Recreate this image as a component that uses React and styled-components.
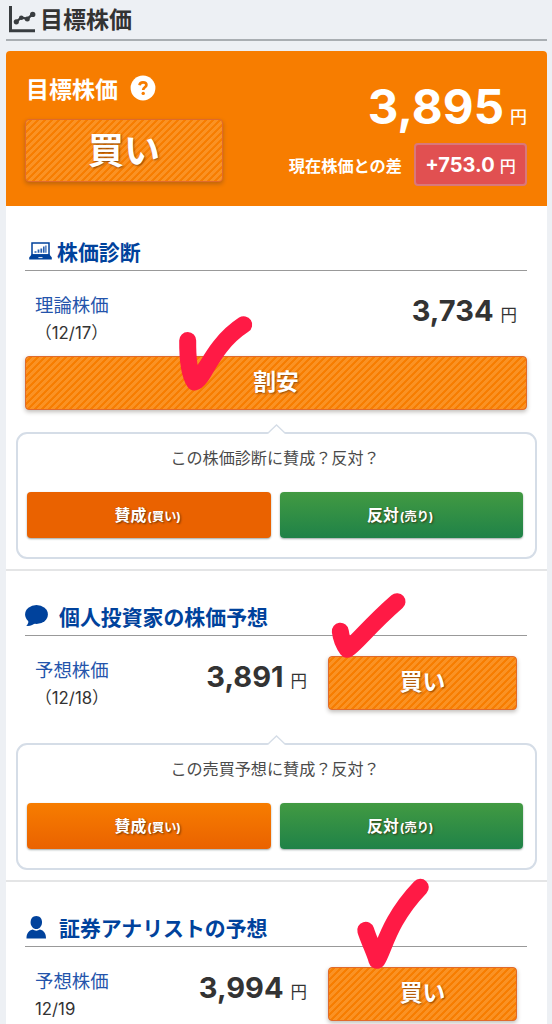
// Target price page for a stock: summary box on top, then one panel per kind of forecast
// Hand drawn check marks are laid over the page in a single svg

import React from 'react';
import styled, {createGlobalStyle, css} from 'styled-components';

const GlobalStyle = createGlobalStyle`
  * {
    box-sizing: border-box;
  }
  body {
    margin: 0;
    background-color: #edf0f4;
    color: #333;
    font-family: Inter, "Noto Sans CJK JP", sans-serif;
    overflow: hidden;
  }
`;

const Page = styled.div`
  position: relative;
  width: 552px;
  height: 1024px;
  overflow: hidden;
`;

const PageHeader = styled.h1`
  display: flex;
  align-items: center;
  gap: 4px;
  height: 41px;
  margin: 0 5px 0 6px;
  padding: 0 0 0 3px;
  border-bottom: 2px solid #a9aeb2;
  font-size: 23px;
  font-weight: 700;
  line-height: 38px;
  white-space: nowrap;
`;

const Card = styled.main`
  margin: 10px 5px 0 6px;
  background-color: #fff;
  border-radius: 4px 4px 0 0;
`;

const Summary = styled.section`
  display: flex;
  justify-content: space-between;
  height: 155px;
  padding: 0 20px 0 19px;
  border-radius: 4px 4px 0 0;
  background-color: #f77d00;
  color: #fff;
`;

const SummaryLeft = styled.div`
  padding-top: 22px;
`;

const SummaryTitle = styled.h2`
  display: flex;
  align-items: center;
  gap: 12px;
  height: 30px;
  margin: 0 0 16px;
  padding-left: 1px;
  font-size: 23px;
  font-weight: 700;
`;

const SummaryRight = styled.div`
  display: flex;
  flex-direction: column;
  align-items: flex-end;
  padding-top: 31px;
`;

const TargetPrice = styled.div`
  display: flex;
  align-items: baseline;
  gap: 6px;
  height: 61px;
  font-size: 47.5px;
  font-weight: 700;
  line-height: 50px;
`;

const TargetYen = styled.span`
  position: relative;
  top: -1px;
  font-size: 17px;
  font-weight: 500;
`;

const Difference = styled.div`
  display: flex;
  align-items: center;
  gap: 12px;
  font-size: 16.2px;
  font-weight: 700;
`;

const DifferenceBadge = styled.span`
  display: flex;
  align-items: center;
  justify-content: center;
  gap: 5px;
  width: 113px;
  height: 43px;
  border: 2px solid #d9787b;
  border-radius: 4px;
  background-color: #e15051;
  font-size: 20px;
  font-weight: 700;
`;

const SmallYen = styled.span`
  font-size: 16px;
  font-weight: 500;
`;

const Verdict = styled.div`
  display: flex;
  align-items: center;
  justify-content: center;
  flex: none;
  width: ${props => props.$width || '100%'};
  height: ${props => props.$height || 54}px;
  padding-bottom: 5px;
  border: 1px solid #e06a2c;
  border-radius: 4px;
  background-color: #f77d00;
  background-image: repeating-linear-gradient(
    135deg,
    #fa9224 0,
    #fa9224 2.2px,
    #f77d00 2.9px,
    #f77d00 4.3px,
    #fa9224 4.95px
  );
  box-shadow: 0 2px 4px rgba(60, 50, 40, 0.32);
  color: #fff;
  font-size: ${props => props.$size || 22.8}px;
  font-weight: 700;
  text-shadow: 1px 1px 2px rgba(90, 40, 0, 0.65);
`;

const Panel = styled.section`
  height: ${props => props.$height}px;
  padding: 28px 10px 0;
  border-bottom: 2px solid #e4e5e6;
`;

const PanelTitle = styled.h2`
  display: flex;
  align-items: center;
  gap: ${props => props.$gap}px;
  height: 37px;
  margin: 0 10px 0 9px;
  padding-bottom: 3px;
  border-bottom: 1.5px solid #999;
  color: #00429c;
  font-size: 20.9px;
  font-weight: 700;
`;

const PanelIcon = styled.span`
  display: flex;
  margin-left: ${props => props.$left || 0}px;
  padding-top: ${props => props.$top || 0}px;
`;

const ForecastRow = styled.div`
  display: flex;
  align-items: flex-start;
  height: ${props => props.$height}px;
  padding: 20px 20px 0 19px;
`;

const ForecastLabel = styled.div`
  width: 120px;
`;

const ForecastName = styled.a`
  display: block;
  color: #2454ab;
  font-size: 18.4px;
  line-height: 28px;
`;

const ForecastDate = styled.div`
  font-size: 16.8px;
  line-height: 28px;
`;

const Price = styled.div`
  display: flex;
  align-items: baseline;
  justify-content: flex-end;
  gap: 7px;
  flex: 1;
  padding-top: ${props => props.$top}px;
  font-size: 29px;
  font-weight: 700;
  line-height: 40px;
`;

const Yen = styled.span`
  font-size: 16.5px;
  font-weight: 400;
`;

const VerdictSlot = styled.div`
  margin-left: 21px;
`;

const WideVerdict = styled.div`
  margin: 0 10px 22px 9px;
`;

const Balloon = styled.div`
  position: relative;
  height: 127px;
  padding: 11px 12px 0 9px;
  border: 2px solid #d5dde7;
  border-radius: 11px;
`;

const BalloonTip = styled.svg`
  position: absolute;
  top: -10px;
  left: 248px;
`;

const Question = styled.p`
  height: 47px;
  margin: 0;
  color: #4a4a4a;
  font-size: 16.1px;
  line-height: 26px;
  text-align: center;
`;

const VoteButtons = styled.div`
  display: grid;
  grid-template-columns: 1fr 1fr;
  gap: 9px;
`;

const voteColors = {
  pressed: css`background: #ea6200;`,
  agree: css`background: linear-gradient(#f77d00, #ea6200);`,
  disagree: css`background: linear-gradient(#429a42, #1f8248);`,
};

const VoteButton = styled.button`
  display: flex;
  align-items: center;
  justify-content: center;
  height: 46px;
  padding: 0 2px 2px 0;
  border: 0;
  border-radius: 4px;
  ${props => voteColors[props.$kind]}
  box-shadow: 0 1px 2px rgba(40, 60, 60, 0.45);
  color: #fff;
  font-family: inherit;
  font-size: 15.9px;
  font-weight: 700;
  text-shadow: 1px 1px 2px rgba(60, 30, 0, 0.7);
`;

const VoteNote = styled.span`
  padding-top: 3px;
  margin-left: 1px;
  font-size: 12.2px;
`;

const Marks = styled.svg`
  position: absolute;
  top: 0;
  left: 0;
  pointer-events: none;
`;

const ChartIcon = () => (
  <svg width="27" height="27" viewBox="0 0 27 27" fill="none" stroke="#393d40">
    <path d="M1.5 0V24.8H26" strokeWidth="3" />
    <path d="M7.3 15.8L12.3 11.5L18.3 12.9L23.7 8.2" strokeWidth="2.3" />
    <g fill="#393d40" stroke="none">
      <circle cx="7.3" cy="15.8" r="2.6" />
      <circle cx="12.3" cy="11.7" r="2.3" />
      <circle cx="18.3" cy="12.9" r="2.5" />
      <circle cx="23.7" cy="8.4" r="2.7" />
    </g>
  </svg>
);

const HelpIcon = () => (
  <svg width="26" height="26" viewBox="0 0 26 26">
    <circle cx="13" cy="13" r="12.4" fill="#fff" />
    <path d="M9.5 10.3C9.8 8.2 11.2 7.3 13 7.3C15 7.3 16.4 8.4 16.4 10C16.4 12.2 13.2 12.3 13.2 14.9" fill="none" stroke="#f77d00" strokeWidth="2.7" />
    <circle cx="13.2" cy="18.4" r="1.7" fill="#f77d00" />
  </svg>
);

const LaptopIcon = () => (
  <svg width="23" height="18" viewBox="0 0 23 18">
    <path d="M3 1H20V13H3Z" fill="#fff" stroke="#00429c" strokeWidth="1.5" />
    <path d="M5.5 10.7V9.3H7.5V10.7ZM8.6 10.7V7.5H10.4V10.7ZM11.4 10.7V6.6H13.2V10.7ZM14 10.7V4.6H15.6V10.7ZM16.3 10.7V3.6H17.5V10.7Z" fill="#2860b0" />
    <path d="M2.7 12.2H20.3L22.8 15.5V17.5H0.2V15.5Z" fill="#00429c" />
    <path d="M9.4 15.6H13.5" stroke="#fff" strokeWidth="0.9" />
  </svg>
);

const BubbleIcon = () => (
  <svg width="24" height="22" viewBox="0 0 24 22" fill="#00429c">
    <ellipse cx="11.5" cy="9.5" rx="11.4" ry="9.4" />
    <path d="M3 14C4 17 3.3 19 1.2 20.8C5 21.3 8.5 19.8 10.5 18Z" />
  </svg>
);

const PersonIcon = () => (
  <svg width="22" height="23" viewBox="0 0 22 23" fill="#00429c">
    <path d="M10.3 0C14 0 16 2.8 16 6.2C16 10 13.5 13 10.3 13C7.1 13 4.6 10 4.6 6.2C4.6 2.8 6.6 0 10.3 0Z" />
    <path d="M0.5 22.5C0.5 17.5 2.7 14.6 6.7 13.6C8.8 15 11.8 15 13.9 13.6C17.9 14.6 20 17.5 20 22.5Z" />
  </svg>
);

const Forecast = ({name, date, price, top, height, verdict}) => (
  <ForecastRow $height={height}>
    <ForecastLabel>
      <ForecastName>{name}</ForecastName>
      <ForecastDate>{date}</ForecastDate>
    </ForecastLabel>
    <Price $top={top}>{price}<Yen>円</Yen></Price>
    {verdict && (
      <VerdictSlot>
        <Verdict $width="189px">{verdict}</Verdict>
      </VerdictSlot>
    )}
  </ForecastRow>
);

const Vote = ({question, agree}) => (
  <Balloon>
    <BalloonTip width="22" height="11" viewBox="0 0 22 11">
      <path d="M0 11L2 9.5L10.5 1L19 9.5L21 11Z" fill="#fff" />
      <path d="M1.5 9.5L10.5 1L19.5 9.5" fill="none" stroke="#d5dde7" strokeWidth="1.3" />
    </BalloonTip>
    <Question>{question}</Question>
    <VoteButtons>
      <VoteButton $kind={agree}>賛成<VoteNote>(買い)</VoteNote></VoteButton>
      <VoteButton $kind="disagree">反対<VoteNote>(売り)</VoteNote></VoteButton>
    </VoteButtons>
  </Balloon>
);

const App = () => (
  <Page>
    <GlobalStyle />
    <PageHeader><ChartIcon />目標株価</PageHeader>
    <Card>
      <Summary>
        <SummaryLeft>
          <SummaryTitle>目標株価<HelpIcon /></SummaryTitle>
          <Verdict $width="198px" $height={63} $size={36}>買い</Verdict>
        </SummaryLeft>
        <SummaryRight>
          <TargetPrice>3,895<TargetYen>円</TargetYen></TargetPrice>
          <Difference>
            現在株価との差
            <DifferenceBadge>+753.0<SmallYen>円</SmallYen></DifferenceBadge>
          </Difference>
        </SummaryRight>
      </Summary>

      <Panel $height={365}>
        <PanelTitle $gap={5}><PanelIcon $left={4} $top={1}><LaptopIcon /></PanelIcon>株価診断</PanelTitle>
        <Forecast name="理論株価" date="（12/17）" price="3,734" top={0} height={85} />
        <WideVerdict><Verdict>割安</Verdict></WideVerdict>
        <Vote question="この株価診断に賛成？反対？" agree="pressed" />
      </Panel>

      <Panel $height={311}>
        <PanelTitle $gap={10}><PanelIcon $top={1}><BubbleIcon /></PanelIcon>個人投資家の株価予想</PanelTitle>
        <Forecast name="予想株価" date="（12/18）" price="3,891" top={1} height={107} verdict="買い" />
        <Vote question="この売買予想に賛成？反対？" agree="agree" />
      </Panel>

      <Panel $height={200}>
        <PanelTitle $gap={11}><PanelIcon $left={1} $top={1}><PersonIcon /></PanelIcon>証券アナリストの予想</PanelTitle>
        <Forecast name="予想株価" date="12/19" price="3,994" top={1} height={107} verdict="買い" />
      </Panel>
    </Card>

    <Marks width="552" height="1024" viewBox="0 0 552 1024" fill="none" stroke="#ff1a45" strokeWidth="17" strokeLinecap="round" strokeLinejoin="round">
      <path d="M187.7 340.5C187.5 359 190 375 194.5 382C204 380 211 346 243.7 324.7" />
      <path d="M340.3 631.3C341 637 344 645 347.3 649.3C356 644 368 627 397 601.7" />
      <path d="M365.7 930.3C369 941 374 950 377 960.3C384 950 388 921 420.3 887.3" />
    </Marks>
  </Page>
);

export default App;
